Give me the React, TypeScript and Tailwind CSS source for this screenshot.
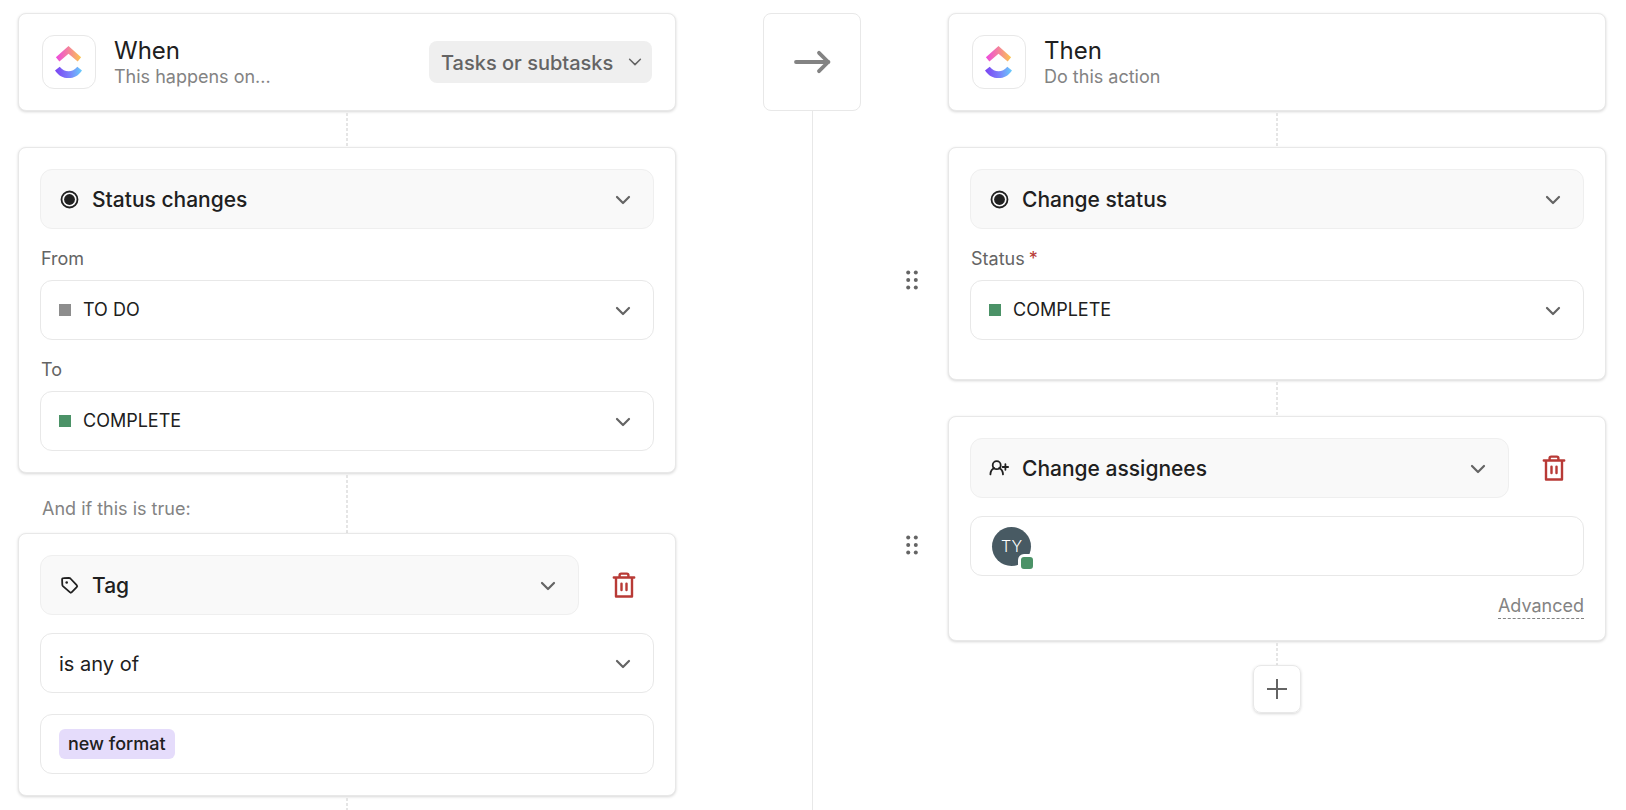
import { useState } from 'react'
import type { ReactNode } from 'react'
import { clsx } from 'clsx'

const STATUSES = ['TO DO', 'IN PROGRESS', 'COMPLETE']

const STATUS_SWATCH: Record<string, string> = {
  'TO DO': 'bg-[#8d8d8d]',
  'IN PROGRESS': 'bg-[#5f55ee]',
  'COMPLETE': 'bg-[#4b9267]',
}

function Logo({ id }: { id: string }) {
  return (
    <div className="flex size-[54px] shrink-0 items-center justify-center rounded-xl border border-[#e8e8e8]">
      <svg width="28" height="34" viewBox="0.5 0 28 34" aria-hidden="true">
        <defs>
          <linearGradient id={`${id}-top`} x1="0" x2="1">
            <stop offset="0" stopColor="#ee49e0" />
            <stop offset="0.5" stopColor="#f4829c" />
            <stop offset="1" stopColor="#fbc84e" />
          </linearGradient>
          <linearGradient id={`${id}-bottom`} x1="0" x2="1">
            <stop offset="0" stopColor="#7a44f2" />
            <stop offset="0.5" stopColor="#7b7cfa" />
            <stop offset="1" stopColor="#68cdfb" />
          </linearGradient>
        </defs>
        <path d="M14 1 26.6 12.2 23.2 16.6 14 8.8 4.9 16.6 1.4 12.2Z" fill={`url(#${id}-top)`} />
        <path d="M.5 25.4 5.2 21.7C7.8 24.9 10.7 26.3 14 26.3S20.2 24.9 22.8 21.7L27.5 25.4C24.1 30.4 19.5 33.1 14 33.1S3.9 30.4.5 25.4Z" fill={`url(#${id}-bottom)`} />
      </svg>
    </div>
  )
}

function Chevron({ thin = false }: { thin?: boolean }) {
  return (
    <svg width="16" height="10" viewBox="0 0 16 10" fill="none" stroke="#646464" strokeWidth={thin ? 1.5 : 2.2} strokeLinecap="round" strokeLinejoin="round" aria-hidden="true">
      <path d={thin ? 'M2.6 2.2 8 7.6 13.4 2.2' : 'M2 2 8 8 14 2'} />
    </svg>
  )
}

function StatusIcon() {
  return (
    <svg width="20" height="20" viewBox="0 0 20 20" aria-hidden="true">
      <circle cx="10.5" cy="10.5" r="8" fill="none" stroke="#202020" strokeWidth="1.8" />
      <circle cx="10.5" cy="10.5" r="5.4" fill="#202020" />
    </svg>
  )
}

function TagIcon() {
  return (
    <svg width="20" height="20" viewBox="-0.5 -0.5 20 20" fill="none" stroke="#202020" strokeWidth="1.8" strokeLinejoin="round" aria-hidden="true">
      <path d="M4 2.6 9.4 2.4C10 2.4 10.5 2.6 10.9 3L17.2 9.7C17.8 10.3 17.8 11.1 17.2 11.7L12.3 16.7C11.7 17.3 10.9 17.3 10.3 16.7L3.4 10.6C3 10.2 2.8 9.7 2.8 9.1L2.6 4C2.6 3.2 3.2 2.6 4 2.6Z" />
      <circle cx="7.2" cy="7" r="1.3" fill="#202020" stroke="none" />
    </svg>
  )
}

function AssigneeIcon() {
  return (
    <svg width="20" height="20" viewBox="0 0 20 20" fill="none" stroke="#202020" strokeWidth="1.8" strokeLinecap="round" aria-hidden="true">
      <circle cx="7.7" cy="7.2" r="4" />
      <path d="M1.4 16.4C1.6 13.2 3 11 5.4 10.2M10 10.2C12.4 11 13.8 13.2 14 16.4M13.6 9H19.1M16.4 6.2V11.8" />
    </svg>
  )
}

function DeleteButton({ label }: { label: string }) {
  return (
    <button type="button" aria-label={label} className="flex w-[60px] shrink-0 cursor-pointer items-center justify-center">
      <svg width="24" height="28" viewBox="0.5 0.6 24 28" fill="none" stroke="#b83a36" strokeWidth="2.4" strokeLinecap="round" strokeLinejoin="round" aria-hidden="true">
        <path d="M2.3 7.1H22.7M4.5 7.1V26.1H20.5V7.1M8.1 6.6V4.8Q8.1 3.2 9.7 3.2H15.3Q16.9 3.2 16.9 4.8V6.6M10 13.2V19.6M15 13.2V19.6" />
      </svg>
    </button>
  )
}

function DragHandle({ label }: { label: string }) {
  return (
    <button type="button" aria-label={label} className="mt-8 cursor-grab place-self-center">
      <svg width="14" height="20" viewBox="0 0 14 20" fill="#646464" aria-hidden="true">
        {[2.5, 10, 17.5].map(y => [3.2, 10.8].map(x => <circle key={`${x}-${y}`} cx={x} cy={y} r="2" />))}
      </svg>
    </button>
  )
}

interface SelectFieldProps {
  id: string
  label?: string
  options: string[]
  value: string
  onChange: (value: string) => void
  lead?: ReactNode
  variant: 'filled' | 'status' | 'plain'
}

// The select fills the whole box; the lead icon and chevron share its grid cell.
function SelectField({ id, label, options, value, onChange, lead, variant }: SelectFieldProps) {
  return (
    <div className="grid min-w-0 flex-1 items-center">
      <select
        id={id}
        aria-label={label}
        value={value}
        onChange={e => onChange(e.target.value)}
        className={clsx(
          'col-start-1 row-start-1 h-[60px] w-full cursor-pointer appearance-none rounded-xl border pr-12 text-[#202020]',
          variant === 'filled' && 'border-[#efefef] bg-[#f9f9f9] pt-0.5 pl-[51px] text-[21px] font-medium',
          variant === 'status' && 'border-[#e8e8e8] bg-white pl-[42px] text-lg',
          variant === 'plain' && 'border-[#e8e8e8] bg-white pt-0.5 pl-[18px] text-xl',
        )}
      >
        {options.map(o => <option key={o}>{o}</option>)}
      </select>
      {lead && <span className="pointer-events-none col-start-1 row-start-1 ml-[19px] justify-self-start">{lead}</span>}
      <span className="pointer-events-none col-start-1 row-start-1 mt-0.5 mr-[23px] justify-self-end"><Chevron /></span>
    </div>
  )
}

function StatusSelect({ id, initial }: { id: string; initial: string }) {
  const [value, setValue] = useState(initial)
  return (
    <SelectField id={id} variant="status" options={STATUSES} value={value} onChange={setValue}
      lead={<span className={`block size-3 ${STATUS_SWATCH[value]}`} />} />
  )
}

function Card({ className, children }: { className?: string; children: ReactNode }) {
  return (
    <div className={clsx('rounded-lg border border-[#e8e8e8] bg-white px-[21px] shadow-[0_1px_3px_rgba(0,0,0,0.16)]', className)}>
      {children}
    </div>
  )
}

function CardHeader({ id, title, subtitle, children }: { id: string; title: string; subtitle: string; children?: ReactNode }) {
  return (
    <Card className="flex h-[98px] items-center">
      <div className="flex flex-1 items-center gap-[18px] pl-0.5">
        <Logo id={id} />
        <div className="pt-0.5">
          <h2 className="text-2xl leading-7 text-[#202020]">{title}</h2>
          <p className="text-lg leading-6 text-[#838383]">{subtitle}</p>
        </div>
      </div>
      {children}
    </Card>
  )
}

function Connector({ className }: { className?: string }) {
  return (
    <div className={clsx('w-0.5 justify-self-center bg-[repeating-linear-gradient(to_bottom,transparent_0_2px,#e5e5e5_2px_5px)]', className)} />
  )
}

function FieldLabel({ htmlFor, required, children }: { htmlFor: string; required?: boolean; children: ReactNode }) {
  return (
    <label htmlFor={htmlFor} className="flex h-[51px] items-center gap-1 pt-2 pl-px text-lg text-[#646464]">
      {children}
      {required && <span className="text-[#b83a36]">*</span>}
    </label>
  )
}

export default function App() {
  const [scope, setScope] = useState('Tasks or subtasks')
  const [trigger, setTrigger] = useState('Status changes')
  const [condition, setCondition] = useState('Tag')
  const [operator, setOperator] = useState('is any of')
  const [firstAction, setFirstAction] = useState('Change status')
  const [secondAction, setSecondAction] = useState('Change assignees')

  return (
    <main className="grid min-h-screen grid-cols-[minmax(0,1fr)_200px_72px_minmax(0,1fr)] bg-white pt-[13px] pr-5 pl-[18px] font-['Inter',sans-serif]">
      <section className="flex flex-col">
        <CardHeader id="when" title="When" subtitle="This happens on...">
          <div className="grid items-center">
            <select aria-label="Applies to" value={scope} onChange={e => setScope(e.target.value)}
              className="col-start-1 row-start-1 mr-0.5 h-[42px] cursor-pointer appearance-none rounded-lg bg-[#efefef] pt-0.5 pr-[38px] pl-3 text-xl font-medium text-[#646464]">
              <option>Tasks or subtasks</option>
              <option>Tasks</option>
              <option>Subtasks</option>
            </select>
            <span className="pointer-events-none col-start-1 row-start-1 mr-[11px] justify-self-end"><Chevron thin /></span>
          </div>
        </CardHeader>
        <Connector className="h-9 self-center" />

        <Card className="py-[21px]">
          <SelectField id="trigger" label="Trigger" variant="filled" lead={<StatusIcon />}
            options={['Status changes', 'Task created']} value={trigger} onChange={setTrigger} />
          <FieldLabel htmlFor="from">From</FieldLabel>
          <StatusSelect id="from" initial="TO DO" />
          <FieldLabel htmlFor="to">To</FieldLabel>
          <StatusSelect id="to" initial="COMPLETE" />
        </Card>

        <div className="grid h-[60px] grid-cols-[1fr_2px_1fr]">
          <p className="self-end pb-3 pl-6 text-lg leading-6 text-[#838383]">And if this is true:</p>
          <Connector />
        </div>

        <Card className="py-[21px]">
          <div className="mb-[18px] flex gap-[15px]">
            <SelectField id="condition" label="Condition" variant="filled" lead={<TagIcon />}
              options={['Tag', 'Priority']} value={condition} onChange={setCondition} />
            <DeleteButton label="Delete condition" />
          </div>
          <SelectField id="operator" label="Operator" variant="plain"
            options={['is any of', 'is not any of']} value={operator} onChange={setOperator} />
          <div className="mt-[21px] flex h-[60px] items-center rounded-xl border border-[#e8e8e8] px-[18px]">
            <span className="rounded-md bg-[#e5dcfb] px-[9px] text-lg leading-[30px] font-medium text-[#202020]">new format</span>
          </div>
        </Card>
        <Connector className="min-h-3 flex-1 self-center" />
      </section>

      <div className="ml-[87px] flex w-[98px] flex-col">
        <div className="flex h-[98px] items-center justify-center rounded-lg border border-[#e8e8e8]">
          <svg width="38" height="24" viewBox="0 0 38 24" fill="none" stroke="#838383" strokeWidth="3.8" strokeLinecap="round" strokeLinejoin="round" aria-hidden="true">
            <path d="M3 12H35.5M26 2.8 35.2 12 26 21.2" />
          </svg>
        </div>
        <div className="ml-[49px] flex-1 border-l border-[#e8e8e8]" />
      </div>

      <section className="col-span-2 grid grid-cols-subgrid content-start *:col-start-2">
        <CardHeader id="then" title="Then" subtitle="Do this action" />
        <Connector className="h-9" />

        <div className="col-span-full! grid grid-cols-subgrid">
          <DragHandle label="Reorder change status" />
          <Card className="pt-[21px] pb-[39px]">
            <SelectField id="action-1" label="First action" variant="filled" lead={<StatusIcon />}
              options={['Change status', 'Change priority']} value={firstAction} onChange={setFirstAction} />
            <FieldLabel htmlFor="status" required>Status</FieldLabel>
            <StatusSelect id="status" initial="COMPLETE" />
          </Card>
        </div>
        <Connector className="h-9" />

        <div className="col-span-full! grid grid-cols-subgrid">
          <DragHandle label="Reorder change assignees" />
          <Card className="py-[21px]">
            <div className="flex gap-[15px]">
              <SelectField id="action-2" label="Second action" variant="filled" lead={<AssigneeIcon />}
                options={['Change assignees', 'Change status']} value={secondAction} onChange={setSecondAction} />
              <DeleteButton label="Delete action" />
            </div>
            <div className="mt-[18px] flex h-[60px] items-center rounded-xl border border-[#e8e8e8] px-[21px]">
              <div className="relative flex size-[39px] items-center justify-center rounded-full bg-[#485a63] text-base font-light text-white">
                TY
                <span className="absolute -right-[5px] -bottom-1.5 size-[18px] rounded-md border-3 border-white bg-[#4b9267]" />
              </div>
            </div>
            <div className="mt-[18px] flex justify-end">
              <a href="#advanced" className="border-b border-dashed border-[#838383] text-lg leading-6 text-[#838383]">Advanced</a>
            </div>
          </Card>
        </div>
        <Connector className="h-6" />
        <button type="button" aria-label="Add action"
          className="flex size-12 cursor-pointer items-center justify-center justify-self-center rounded-lg border border-[#e8e8e8] shadow-[0_1px_3px_rgba(0,0,0,0.16)]">
          <svg width="20" height="20" viewBox="0 0 20 20" stroke="#646464" strokeWidth="2" aria-hidden="true">
            <path d="M0 10H20M10 0V20" />
          </svg>
        </button>
      </section>
    </main>
  )
}
